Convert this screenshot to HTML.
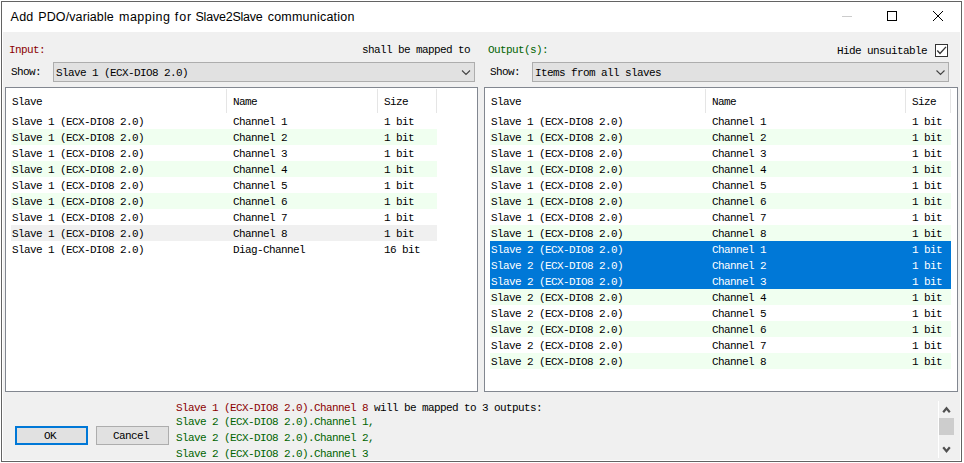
<!DOCTYPE html>
<html lang="en"><head><meta charset="utf-8"><title>Add PDO/variable mapping for Slave2Slave communication</title>
<style>
html,body{margin:0;padding:0;background:#fff;}
body{width:964px;height:463px;position:relative;overflow:hidden;font-family:"Liberation Mono",monospace;font-size:12px;color:#000;}
#win{position:absolute;left:1px;top:1px;width:959px;height:459px;border:1px solid #636363;background:#fff;}
#client{position:absolute;left:3px;top:32px;width:957px;height:428px;background:#f0f0f0;}
#title{position:absolute;left:10px;top:9px;height:16px;line-height:16px;font-family:"Liberation Sans",sans-serif;font-size:12.5px;white-space:pre;color:#000;}
#title span{position:absolute;top:0}
.t{position:absolute;height:16px;line-height:16px;white-space:pre;font-size:11px;letter-spacing:-.6px;}
.r{margin-right:-1.2px;}
.red{color:#8b0000}.green{color:#006400}.w{color:#fff}
.combo{position:absolute;top:62px;height:18px;border:1px solid #adadad;background:#e1e1e1;}
.list{position:absolute;top:87px;height:303px;border:1px solid #828790;background:#fff;}
.row{position:absolute;height:16px;}
.alt{background:#f0fff0}.gray{background:#f0f0f0}.sel{background:#0078d7}
.div{position:absolute;top:89px;height:24px;width:1px;background:#e5e5e5;}
.btn{position:absolute;top:426px;width:71px;height:17px;border:1px solid #adadad;background:#e1e1e1;}
svg{position:absolute;overflow:visible}
</style></head><body>
<div id="win"></div>
<div id="client"></div>
<div id="title"><span style="left:0.6px;letter-spacing:0.20px">Add</span> <span style="left:28.3px;letter-spacing:0.10px">PDO/variable</span> <span style="left:109.0px;letter-spacing:0.50px">mapping</span> <span style="left:164.8px;letter-spacing:0.90px">for</span> <span style="left:185.5px;letter-spacing:-0.22px">Slave2Slave</span> <span style="left:257.7px;letter-spacing:0.22px">communication</span></div>
<svg style="left:0;top:0" width="964" height="40">
<path d="M842 16.5H852" stroke="#ccc" stroke-width="1" fill="none"/>
<rect x="887.5" y="11.5" width="9" height="9" stroke="#000" stroke-width="1" fill="none"/>
<path d="M933 11L943 21M943 11L933 21" stroke="#000" stroke-width="1" fill="none"/>
</svg>

<span class="t red" style="left:9px;top:42px">Input:</span>
<span class="t " style="left:362px;top:42px">shall be mapped to</span>
<span class="t green" style="left:488px;top:42px">Output(s):</span>
<span class="t " style="left:837px;top:43px">Hide unsuitable</span>
<span class="t " style="left:11px;top:64px">Show:</span>
<span class="t " style="left:490px;top:64px">Show:</span>
<div style="position:absolute;left:935px;top:44px;width:11px;height:11px;border:1px solid #333;background:#fff"></div>
<svg style="left:935px;top:44px" width="13" height="13"><path d="M2.3 6.6L5 9.4L11 2.9" stroke="#333" stroke-width="1.4" fill="none"/></svg>
<div class="combo" style="left:53px;width:420px"></div>
<div class="combo" style="left:532px;width:415px"></div>
<span class="t " style="left:56px;top:65px">Slave 1 (ECX-DIO8 2.0)</span>
<span class="t " style="left:535px;top:65px">Items from all slaves</span>
<svg style="left:0;top:0" width="964" height="100"><path d="M462 70.5L466 74.5L470 70.5M936.5 70.5L940.5 74.5L944.5 70.5" stroke="#444" stroke-width="1.1" fill="none"/></svg>
<div class="list" style="left:5px;width:471px"></div>
<div class="list" style="left:484px;width:472px"></div>
<div class="div" style="left:226px"></div>
<div class="div" style="left:377px"></div>
<div class="div" style="left:436px"></div>
<div class="div" style="left:705px"></div>
<div class="div" style="left:905px"></div>
<div class="div" style="left:950px"></div>
<span class="t " style="left:12px;top:94px">Slave</span>
<span class="t " style="left:233px;top:94px">Name</span>
<span class="t " style="left:384px;top:94px">Size</span>
<span class="t " style="left:491px;top:94px">Slave</span>
<span class="t " style="left:712px;top:94px">Name</span>
<span class="t " style="left:912px;top:94px">Size</span>
<span class="t " style="left:12px;top:114px">Slave 1 (ECX-DIO8 2.0)</span>
<span class="t " style="left:233px;top:114px">Channel 1</span>
<span class="t " style="left:384px;top:114px">1 bit</span>
<div class="row alt" style="left:11px;top:129px;width:426px"></div>
<span class="t " style="left:12px;top:130px">Slave 1 (ECX-DIO8 2.0)</span>
<span class="t " style="left:233px;top:130px">Channel 2</span>
<span class="t " style="left:384px;top:130px">1 bit</span>
<span class="t " style="left:12px;top:146px">Slave 1 (ECX-DIO8 2.0)</span>
<span class="t " style="left:233px;top:146px">Channel 3</span>
<span class="t " style="left:384px;top:146px">1 bit</span>
<div class="row alt" style="left:11px;top:161px;width:426px"></div>
<span class="t " style="left:12px;top:162px">Slave 1 (ECX-DIO8 2.0)</span>
<span class="t " style="left:233px;top:162px">Channel 4</span>
<span class="t " style="left:384px;top:162px">1 bit</span>
<span class="t " style="left:12px;top:178px">Slave 1 (ECX-DIO8 2.0)</span>
<span class="t " style="left:233px;top:178px">Channel 5</span>
<span class="t " style="left:384px;top:178px">1 bit</span>
<div class="row alt" style="left:11px;top:193px;width:426px"></div>
<span class="t " style="left:12px;top:194px">Slave 1 (ECX-DIO8 2.0)</span>
<span class="t " style="left:233px;top:194px">Channel 6</span>
<span class="t " style="left:384px;top:194px">1 bit</span>
<span class="t " style="left:12px;top:210px">Slave 1 (ECX-DIO8 2.0)</span>
<span class="t " style="left:233px;top:210px">Channel 7</span>
<span class="t " style="left:384px;top:210px">1 bit</span>
<div class="row gray" style="left:11px;top:225px;width:426px"></div>
<span class="t " style="left:12px;top:226px">Slave 1 (ECX-DIO8 2.0)</span>
<span class="t " style="left:233px;top:226px">Channel 8</span>
<span class="t " style="left:384px;top:226px">1 bit</span>
<span class="t " style="left:12px;top:242px">Slave 1 (ECX-DIO8 2.0)</span>
<span class="t " style="left:233px;top:242px">Diag-Channel</span>
<span class="t " style="left:384px;top:242px">16 bit</span>
<span class="t " style="left:491px;top:114px">Slave 1 (ECX-DIO8 2.0)</span>
<span class="t " style="left:712px;top:114px">Channel 1</span>
<span class="t " style="left:912px;top:114px">1 bit</span>
<div class="row alt" style="left:490px;top:129px;width:461px"></div>
<span class="t " style="left:491px;top:130px">Slave 1 (ECX-DIO8 2.0)</span>
<span class="t " style="left:712px;top:130px">Channel 2</span>
<span class="t " style="left:912px;top:130px">1 bit</span>
<span class="t " style="left:491px;top:146px">Slave 1 (ECX-DIO8 2.0)</span>
<span class="t " style="left:712px;top:146px">Channel 3</span>
<span class="t " style="left:912px;top:146px">1 bit</span>
<div class="row alt" style="left:490px;top:161px;width:461px"></div>
<span class="t " style="left:491px;top:162px">Slave 1 (ECX-DIO8 2.0)</span>
<span class="t " style="left:712px;top:162px">Channel 4</span>
<span class="t " style="left:912px;top:162px">1 bit</span>
<span class="t " style="left:491px;top:178px">Slave 1 (ECX-DIO8 2.0)</span>
<span class="t " style="left:712px;top:178px">Channel 5</span>
<span class="t " style="left:912px;top:178px">1 bit</span>
<div class="row alt" style="left:490px;top:193px;width:461px"></div>
<span class="t " style="left:491px;top:194px">Slave 1 (ECX-DIO8 2.0)</span>
<span class="t " style="left:712px;top:194px">Channel 6</span>
<span class="t " style="left:912px;top:194px">1 bit</span>
<span class="t " style="left:491px;top:210px">Slave 1 (ECX-DIO8 2.0)</span>
<span class="t " style="left:712px;top:210px">Channel 7</span>
<span class="t " style="left:912px;top:210px">1 bit</span>
<div class="row alt" style="left:490px;top:225px;width:461px"></div>
<span class="t " style="left:491px;top:226px">Slave 1 (ECX-DIO8 2.0)</span>
<span class="t " style="left:712px;top:226px">Channel 8</span>
<span class="t " style="left:912px;top:226px">1 bit</span>
<div class="row sel" style="left:490px;top:241px;width:461px"></div>
<span class="t w" style="left:491px;top:242px">Slave 2 (ECX-DIO8 2.0)</span>
<span class="t w" style="left:712px;top:242px">Channel 1</span>
<span class="t w" style="left:912px;top:242px">1 bit</span>
<div class="row sel" style="left:490px;top:257px;width:461px"></div>
<span class="t w" style="left:491px;top:258px">Slave 2 (ECX-DIO8 2.0)</span>
<span class="t w" style="left:712px;top:258px">Channel 2</span>
<span class="t w" style="left:912px;top:258px">1 bit</span>
<div class="row sel" style="left:490px;top:273px;width:461px"></div>
<span class="t w" style="left:491px;top:274px">Slave 2 (ECX-DIO8 2.0)</span>
<span class="t w" style="left:712px;top:274px">Channel 3</span>
<span class="t w" style="left:912px;top:274px">1 bit</span>
<div class="row alt" style="left:490px;top:289px;width:461px"></div>
<span class="t " style="left:491px;top:290px">Slave 2 (ECX-DIO8 2.0)</span>
<span class="t " style="left:712px;top:290px">Channel 4</span>
<span class="t " style="left:912px;top:290px">1 bit</span>
<span class="t " style="left:491px;top:306px">Slave 2 (ECX-DIO8 2.0)</span>
<span class="t " style="left:712px;top:306px">Channel 5</span>
<span class="t " style="left:912px;top:306px">1 bit</span>
<div class="row alt" style="left:490px;top:321px;width:461px"></div>
<span class="t " style="left:491px;top:322px">Slave 2 (ECX-DIO8 2.0)</span>
<span class="t " style="left:712px;top:322px">Channel 6</span>
<span class="t " style="left:912px;top:322px">1 bit</span>
<span class="t " style="left:491px;top:338px">Slave 2 (ECX-DIO8 2.0)</span>
<span class="t " style="left:712px;top:338px">Channel 7</span>
<span class="t " style="left:912px;top:338px">1 bit</span>
<div class="row alt" style="left:490px;top:353px;width:461px"></div>
<span class="t " style="left:491px;top:354px">Slave 2 (ECX-DIO8 2.0)</span>
<span class="t " style="left:712px;top:354px">Channel 8</span>
<span class="t " style="left:912px;top:354px">1 bit</span>
<div class="btn" style="left:15px;border:2px solid #0078d7;width:69px;height:15px"></div>
<div class="btn" style="left:96px"></div>
<span class="t " style="left:44px;top:428px">OK</span>
<span class="t " style="left:113px;top:428px">Cancel</span>
<span class="t" style="left:176px;top:400px"><span class="red">Slave 1 (ECX-DIO8 2.0).Channel 8</span> will be mapped to 3 outputs:</span>
<span class="t green" style="left:176px;top:414px">Slave 2 (ECX-DIO8 2.0).Channel 1,</span>
<span class="t green" style="left:176px;top:430px">Slave 2 (ECX-DIO8 2.0).Channel 2,</span>
<span class="t green" style="left:176px;top:446px">Slave 2 (ECX-DIO8 2.0).Channel 3</span>
<div style="position:absolute;left:938px;top:401px;width:1px;height:57px;background:#fff"></div>
<div style="position:absolute;left:939px;top:418px;width:15px;height:17px;background:#cdcdcd"></div>
<svg style="left:0;top:0" width="964" height="463"><path d="M943.2 412.2L946.5 408.3L949.8 412.2M943.2 447.3L946.5 451.2L949.8 447.3" stroke="#505050" stroke-width="2.2" fill="none"/></svg>
</body></html>
